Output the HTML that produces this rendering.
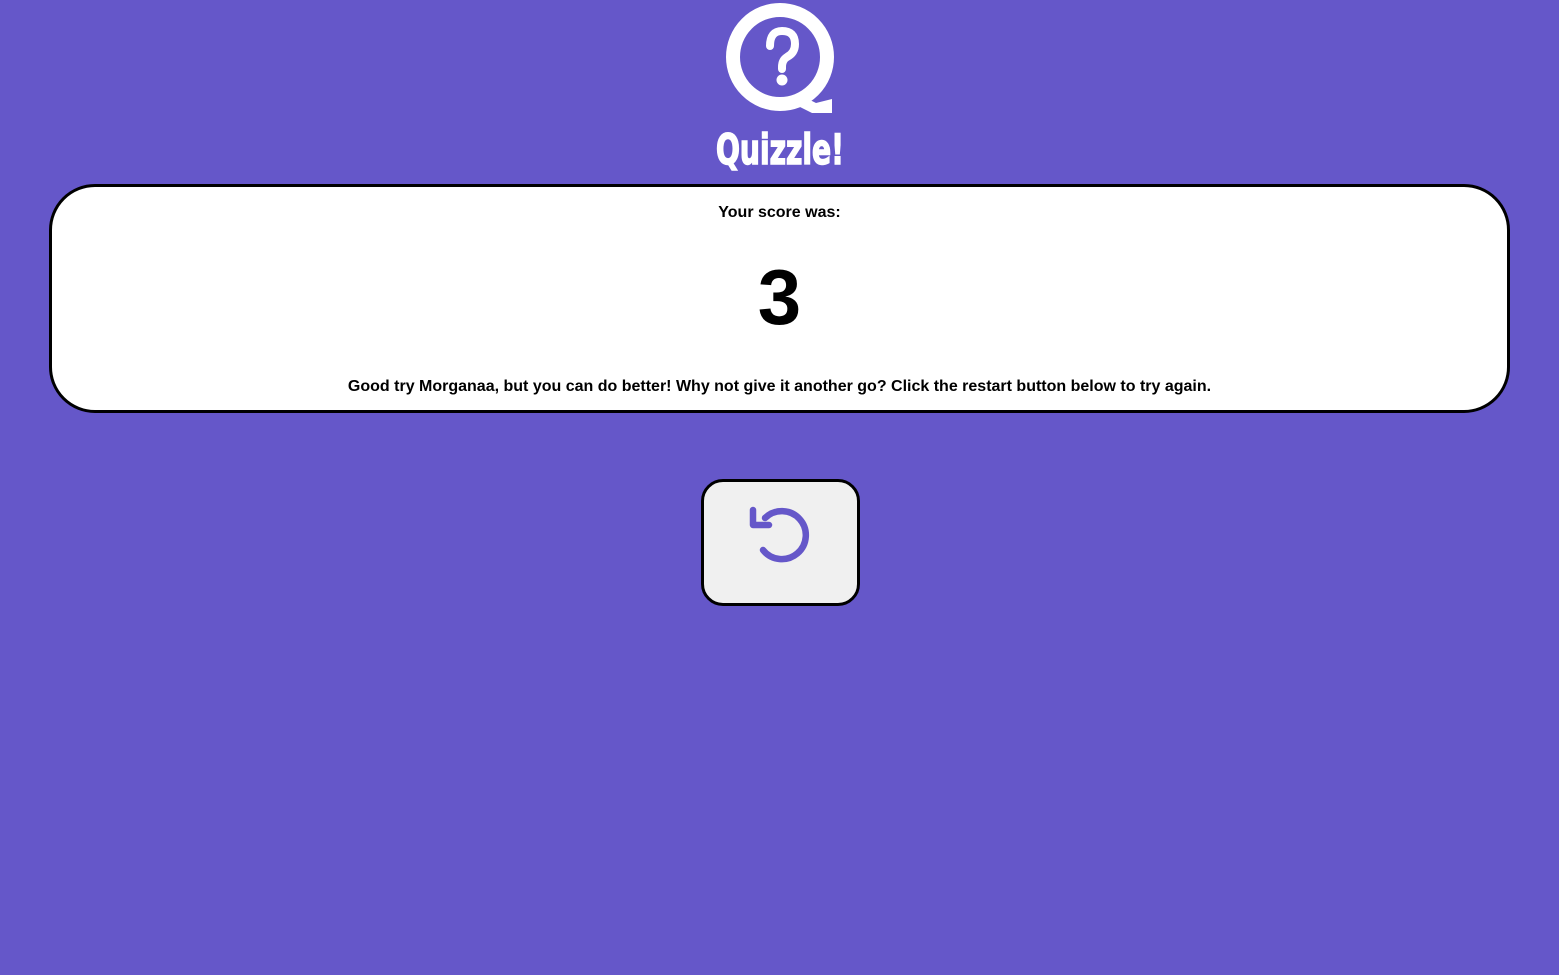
<!DOCTYPE html>
<html><head><style>
body{margin:0;width:1559px;height:975px;background:#6557c9;font-family:"Liberation Sans",sans-serif;position:relative;overflow:hidden}
.card{position:absolute;left:49px;top:184px;width:1455px;height:223px;border:3px solid #000;border-radius:46px;background:#fff}
.t{position:absolute;left:0;right:0;text-align:center;font-weight:bold;color:#000}
.btn{position:absolute;left:701px;top:479px;width:153px;height:121px;border:3px solid #000;border-radius:22px;background:#f0f0f0}
</style></head><body>
<svg style="position:absolute;left:700px;top:0" width="160" height="180">
<circle cx="80" cy="57" r="47" fill="none" stroke="#fff" stroke-width="14"/>
<path d="M98 94 L116 103 L132 99 L132 113 L112 113 L90 102 Z" fill="#fff"/>
<path d="M70 46 Q70 31 82 31 Q95 31 95 44 Q95 53 87 57 Q82 60 82 67 L82 69" fill="none" stroke="#fff" stroke-width="8" stroke-linecap="round"/>
<circle cx="82" cy="80" r="5.5" fill="#fff"/>
<text x="80" y="164" text-anchor="middle" font-family="DejaVu Sans Condensed, Liberation Sans Narrow, sans-serif" font-weight="bold" font-size="42" fill="#fff" stroke="#fff" stroke-width="1.5" textLength="128" lengthAdjust="spacingAndGlyphs">Quizzle!</text>
</svg>
<div class="card">
<div class="t" style="top:17px;font-size:16px">Your score was:</div>
<div class="t" style="top:65px;font-size:78px;line-height:90px">3</div>
<div class="t" style="top:191px;font-size:16px">Good try Morganaa, but you can do better! Why not give it another go? Click the restart button below to try again.</div>
</div>
<div class="btn"></div>
<svg style="position:absolute;left:740px;top:495px" width="80" height="80">
<path d="M25 23 A24 24 0 1 1 23 55" fill="none" stroke="#6557c9" stroke-width="6.5" stroke-linecap="round"/>
<path d="M13 15 L13 30 L29 30" fill="none" stroke="#6557c9" stroke-width="6.5" stroke-linecap="round" stroke-linejoin="round"/>
</svg>
</body></html>
